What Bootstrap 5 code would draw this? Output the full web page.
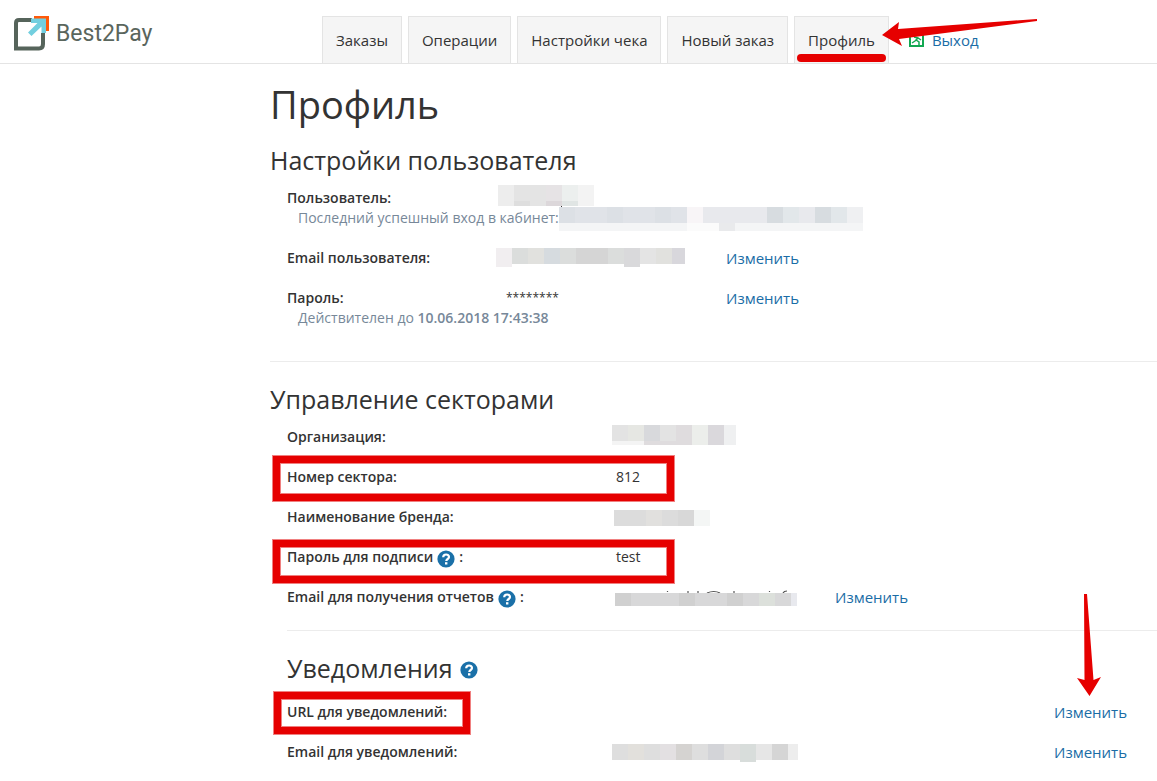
<!DOCTYPE html>
<html lang="ru">
<head>
<meta charset="utf-8">
<meta name="viewport" content="width=device-width, initial-scale=1">
<title>Best2Pay — Профиль</title>
<link rel="stylesheet" href="https://cdn.jsdelivr.net/npm/bootstrap@5.3.0/dist/css/bootstrap.min.css">
<style>
  body { font-family: "Open Sans", "Noto Sans", sans-serif; font-size: 14px; line-height: 20px; color: #333; background: #fff; overflow-x: hidden; }
  a { color: #1a6da6; text-decoration: none; }
  .topbar { height: 64px; border-bottom: 1px solid #e4e4e4; padding-left: 13px; }
  .brand { width: 309px; padding-top: 16px; gap: 6px; color: #5a665d; font-family: Roboto, sans-serif; font-size: 23px; line-height: 36px; }
  .brand svg { margin-top: -1px; }
  .brand:hover { color: #5a665d; }
  .tabs { gap: 6px; }
  .tabs .tab { height: 48px; padding: 13px 13px 0; border: 1px solid #e4e4e4; background: #f5f5f5; color: #333; white-space: nowrap; margin-bottom: -1px; }
  .tab.current::after { content: ""; position: absolute; left: 2px; right: 2px; bottom: 1px; height: 8px; border-radius: 4px; background: #e60000; }
  .tab, .exit, dd a { font-size: 15px; }
  .exit { padding: 17px 0 0 20px; gap: 8px; }
  .arrow-profile { right: -150px; top: 2px; }
  .content { padding: 12px 0 0 270px; }
  h1 { font-size: 38px; line-height: 56px; font-weight: 400; margin: 0 0 8px; }
  h2, h3 { font-size: 25px; line-height: 40px; font-weight: 400; margin: 0 0 8px; }
  h3 { margin-bottom: 14px; }
  .fields { padding-left: 17px; margin: 0; }
  .field { display: grid; grid-template-columns: 209px 230px 1fr; grid-auto-rows: 20px; margin-bottom: 20px; position: relative; white-space: nowrap; }
  .sector .field { grid-template-columns: 325px 223px 1fr; }
  .notify .field { grid-template-columns: 325px 1fr 103px; }
  .field dt { font-weight: 600; }
  .field dd { margin: 0; }
  .field svg { display: block; }
  .plain { padding-left: 4px; }
  .field .stars { padding-left: 10px; font-size: 12px; }
  .note { grid-column: 1 / -1; padding-left: 11px; color: #778899; }
  .note b { font-weight: 600; }
  .rule { height: 1px; background: #ececec; }
  .rule-main { margin: 33px 0 17px; }
  .rule-sub { margin: 23px 0 17px 17px; }
  .help { border: 0; padding: 0; background: none; width: 18px; height: 18px; margin-top: 3px; }
  .frame { position: absolute; border: 8px solid #e60000; outline: 1px solid #f08080; outline-offset: -1px; pointer-events: none; box-shadow: inset 0 0 0 1px #f08080; left: -15px; width: 403px; top: -12px; height: 47px; }
  .frame-short { width: 198px; height: 44px; left: -14px; top: -11px; }
  .frame-low { top: -8px; height: 45px; }
  .arrow-url { position: absolute; right: 55px; top: -109px; pointer-events: none; }
</style>
</head>
<body>
<svg width="0" height="0" class="position-absolute" aria-hidden="true">
  <symbol id="q" viewBox="0 0 18 18"><circle cx="9" cy="9" r="8.6" fill="#1a70a8"/><path d="M6.2 7.2C6.2 3.6 12 3.7 12 7c0 2-2.700 2-2.700 4" fill="none" stroke="#fff" stroke-width="2.200"/><rect x="8" y="12.200" width="2.400" height="2.300" fill="#fff"/></symbol>
</svg>
<header class="topbar d-flex">
  <a href="#" class="brand d-flex flex-shrink-0 align-items-start">
    <svg width="37" height="37" viewBox="0 0 37 37" aria-hidden="true">
      <path d="M19 5H6Q3 5 3 8V33.500H26Q30 33.500 30 29V18" fill="none" stroke="#56645b" stroke-width="4"/>
      <path d="M21 1H36V16H31V6H21z" fill="#ff5a0a"/>
      <path d="M18 3.500H33V18H28.500V11.500L18.500 21L15 17.500L24.500 8H18z" fill="#72cfdf"/>
    </svg>
    <span>Best2Pay</span>
  </a>
  <nav class="tabs d-flex align-items-end">
    <a class="tab" href="#">Заказы</a>
    <a class="tab" href="#">Операции</a>
    <a class="tab" href="#">Настройки чека</a>
    <a class="tab" href="#">Новый заказ</a>
    <a class="tab current position-relative" href="#">Профиль
      <svg class="arrow-profile position-absolute z-1" width="156" height="27" viewBox="0 0 156 27" aria-hidden="true"><path d="M0 16L17 3L16 10L155 0V2L17 20L20 27z" fill="#e60000"/></svg>
    </a>
  </nav>
  <a class="exit d-flex align-items-center" href="#">
    <svg width="15" height="14" viewBox="0 0 15 14" aria-hidden="true"><rect x="1" y="1" width="13" height="12" fill="#fff" stroke="#13a852" stroke-width="2"/><path d="M5 4l4 1 3 2M9 5L6 8l-3 2M7 7l3 2v3" fill="none" stroke="#13a852" stroke-width="1.500"/></svg>
    <span>Выход</span>
  </a>
</header>
<main class="content">
  <h1>Профиль</h1>
  <section>
    <h2>Настройки пользователя</h2>
    <dl class="fields">
      <div class="field">
        <dt>Пользователь:</dt>
        <dd><svg width="98" height="20" overflow="visible" shape-rendering="crispEdges" aria-hidden="true"><g transform="translate(2 -3)"><path fill="#ededed" d="M0 0h16v21H0z"/><path fill="#e4e4e4" d="M16 0h32v21H16z"/><path fill="#e6e3e5" d="M48 0h16v16H48z"/><path fill="#dcd7da" d="M48 16h16v5H48z"/><path fill="#ecefee" d="M64 0h16v16H64z"/><path fill="#e0e5e4" d="M64 16h16v5H64z"/><path fill="#f3f3f3" d="M80 0h16v21H80z"/><path fill="#dedede" d="M16 16h16v5H16z"/><path fill="#333" d="M63 21h1v1h-1z"/></g></svg></dd>
        <dd class="note d-flex">Последний успешный вход в кабинет:
          <svg width="304" height="20" overflow="visible" shape-rendering="crispEdges" aria-hidden="true"><g transform="translate(0 -1)"><path fill="#f4f5f6" d="M0 16h304v8H0z"/><path fill="#e0e3e8" d="M0 0h128v16H0z"/><path fill="#dce0e5" d="M0 0h16v16H0zM48 0h16v16H48zM96 0h16v16H96z"/><path fill="#f8f5f7" d="M128 0h16v16h-16z"/><path fill="#e8e9ed" d="M144 0h144v16H144z"/><path fill="#d7dce0" d="M208 0h16v16h-16zM256 0h16v16h-16z"/><path fill="#e2e7ea" d="M224 0h16v16h-16zM272 0h16v16h-16z"/><path fill="#eff0f2" d="M288 0h16v16h-16z"/><path fill="#fbfbfb" d="M128 16h32v8h-32z"/><path fill="#e9eaec" d="M160 16h16v8h-16z"/></g></svg></dd>
      </div>
      <div class="field">
        <dt>Email пользователя:</dt>
        <dd><svg width="189" height="20" shape-rendering="crispEdges" aria-hidden="true"><path fill="#f1eef0" d="M0 0h16v19H0z"/><path fill="#dbdddc" d="M16 0h173v16H16z"/><path fill="#e1e1de" d="M32 0h16v16H32zM160 0h16v16h-16z"/><path fill="#d6dbdf" d="M48 0h16v16H48z"/><path fill="#d8d7dc" d="M176 0h13v16h-13z"/><path fill="#d5d5d5" d="M80 0h32v16H80z"/><path fill="#d9d9db" d="M128 0h16v19h-16z"/><path fill="#e4e4e4" d="M144 0h16v16h-16z"/></svg></dd>
        <dd><a href="#">Изменить</a></dd>
      </div>
      <div class="field">
        <dt>Пароль:</dt>
        <dd class="stars">********</dd>
        <dd><a href="#">Изменить</a></dd>
        <dd class="note">Действителен до <b>10.06.2018 17:43:38</b></dd>
      </div>
    </dl>
  </section>
  <div class="rule rule-main"></div>
  <section>
    <h2>Управление секторами</h2>
    <dl class="fields sector">
      <div class="field">
        <dt>Организация:</dt>
        <dd><svg width="124" height="20" overflow="visible" shape-rendering="crispEdges" aria-hidden="true"><g transform="translate(0 -2)"><path fill="#f4f4f4" d="M0 16h124v4H0z"/><path fill="#e3e3e3" d="M0 0h64v16H0z"/><path fill="#e6e7e3" d="M16 0h16v16H16z"/><path fill="#d8d9dc" d="M32 0h16v16H32z"/><path fill="#dfdcde" d="M32 16h32v4H32zM64 0h16v20H64z"/><path fill="#eceeeb" d="M80 0h16v20H80z"/><path fill="#dad8dc" d="M96 0h16v20H96z"/><path fill="#eff0f1" d="M112 0h12v20h-12z"/></g></svg></dd>
      </div>
      <div class="field">
        <dt>Номер сектора:</dt>
        <dd class="plain">812</dd>
        <dd class="frame" aria-hidden="true"></dd>
      </div>
      <div class="field">
        <dt>Наименование бренда:</dt>
        <dd><svg width="98" height="20" shape-rendering="crispEdges" aria-hidden="true"><path fill="#dcdcdc" d="M2 3h80v16H2z"/><path fill="#e1e0de" d="M34 3h16v16H34z"/><path fill="#d8d8d8" d="M66 3h16v16H66z"/><path fill="#f4f6f5" d="M82 3h16v16H82z"/></svg></dd>
      </div>
      <div class="field">
        <dt class="d-flex gap-1">Пароль для подписи <button class="help d-flex" type="button" aria-label="Справка"><svg width="18" height="18"><use href="#q"/></svg></button> :</dt>
        <dd class="plain">test</dd>
        <dd class="frame frame-low" aria-hidden="true"></dd>
      </div>
      <div class="field">
        <dt class="d-flex gap-1">Email для получения отчетов <button class="help d-flex" type="button" aria-label="Справка"><svg width="18" height="18"><use href="#q"/></svg></button> :</dt>
        <dd><svg width="185" height="20" aria-hidden="true"><path stroke="#555" stroke-width="1.200" fill="none" d="M55.500 4v1M76 4v2M86 4v2M95 6q7-3 13 0M122 4v2M157.500 4v1M171 6q1-2 4-2"/><g shape-rendering="crispEdges"><path fill="#d8d8d9" d="M3 6h176v13H3z"/><path fill="#d0d0d0" d="M3 6h16v13H3zM67 6h16v13H67zM115 6h16v13h-16z"/><path fill="#dce0db" d="M147 6h16v13h-16z"/><path fill="#e8e9ee" d="M179 6h6v13h-6z"/></g></svg></dd>
        <dd><a href="#">Изменить</a></dd>
      </div>
    </dl>
  </section>
  <div class="rule rule-sub"></div>
  <section class="fields">
    <h3 class="d-flex align-items-center gap-2">Уведомления <button class="help d-flex" type="button" aria-label="Справка"><svg width="18" height="18"><use href="#q"/></svg></button></h3>
    <dl class="notify m-0">
      <div class="field">
        <dt>URL для уведомлений:</dt>
        <dd></dd>
        <dd><a href="#">Изменить</a></dd>
        <dd class="frame frame-short" aria-hidden="true"></dd>
        <dd class="arrow-url"><svg width="26" height="103" viewBox="0 0 26 103" aria-hidden="true"><path d="M8 1h3l6.500 86L25 84L13.500 103L1 85l7.500 2z" fill="#e60000"/></svg></dd>
      </div>
      <div class="field mb-0">
        <dt>Email для уведомлений:</dt>
        <dd><svg width="186" height="20" shape-rendering="crispEdges" aria-hidden="true"><path fill="#dedede" d="M0 2h176v16H0z"/><path fill="#e2e0dc" d="M16 2h16v16H16z"/><path fill="#e3e0e2" d="M48 2h16v16H48z"/><path fill="#d5d3d1" d="M64 2h16v16H64z"/><path fill="#d3d4d8" d="M96 2h16v16H96z"/><path fill="#d8dddb" d="M128 2h16v18h-16z"/><path fill="#e6e6e6" d="M144 2h16v16h-16z"/><path fill="#d5d5d5" d="M160 2h16v16h-16z"/><path fill="#ededed" d="M176 2h10v16h-10z"/></svg></dd>
        <dd><a href="#">Изменить</a></dd>
      </div>
    </dl>
  </section>
</main>
<script src="https://cdn.jsdelivr.net/npm/bootstrap@5.3.0/dist/js/bootstrap.bundle.min.js"></script>
</body>
</html>
